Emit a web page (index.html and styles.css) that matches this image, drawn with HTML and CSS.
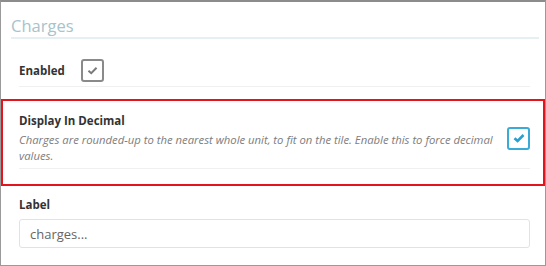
FILE: index.html
```html
<!DOCTYPE html>
<html lang="en">
<head>
  <meta charset="UTF-8">
  <meta name="viewport" content="width=device-width, initial-scale=1.0">
  <title>Charges</title>
  <link rel="stylesheet" href="styles.css">
</head>
<body>
  <div class="panel">
    <h2 class="panel-title">Charges</h2>

    <div class="field field-inline">
      <label class="field-label">Enabled</label>
      <span class="check">
        <svg viewBox="0 0 12 10" width="11" height="9"><path d="M1.5 5.2 L4.6 8 L10.5 2" fill="none" stroke="currentColor" stroke-width="2.2"/></svg>
      </span>
    </div>

    <!-- opcion resaltada -->
    <div class="highlight">
      <div class="field field-split">
        <div class="field-text">
          <label class="field-label">Display In Decimal</label>
          <p class="field-help">Charges are rounded-up to the nearest whole unit, to fit on the tile. Enable this to force decimal values.</p>
        </div>
        <span class="check check-on">
          <svg viewBox="0 0 12 10" width="12" height="10"><path d="M1.5 5.2 L4.6 8 L10.5 2" fill="none" stroke="currentColor" stroke-width="2.6"/></svg>
        </span>
      </div>
    </div>

    <div class="field field-last">
      <label class="field-label">Label</label>
      <input class="text-input" type="text" placeholder="charges...">
    </div>
  </div>
</body>
</html>
```

FILE: styles.css
```css
body {
  margin: 0;
  font-family: "Open Sans", Arial, sans-serif;
  background: white;
}

.panel {
  box-sizing: border-box;
  width: 546px;
  height: 266px;
  border: 1px solid #9a9a9a;
  border-top: 2px solid #8c8c8c;
  overflow: hidden;
}

.panel-title {
  margin: 12px 6px 0 10px;
  padding: 0;
  font-size: 16.5px;
  font-weight: normal;
  line-height: 23px;
  color: #a7c3cb;
  border-bottom: 2px solid #e6eff1;
}

.field {
  margin: 0 15px 0 18px;
}

.field-label {
  display: block;
  font-size: 11.5px;
  font-weight: bold;
  line-height: 17px;
  color: #333;
}

.field-inline {
  display: flex;
  align-items: center;
  gap: 16px;
  margin-top: 20px;
  padding-bottom: 4px;
  border-bottom: 1px solid #f0f0f0;
}

.highlight {
  margin-top: 12px;
  padding: 11px 0 15px;
  border: 2px solid #e3141b;
}

.highlight .field {
  margin: 0 13px 0 16px;
}

.field-split {
  display: flex;
  align-items: center;
  justify-content: space-between;
  padding-bottom: 4px;
  border-bottom: 1px solid #f0f0f0;
}

.field-text {
  flex: 1;
  padding-right: 6px;
}

.field-help {
  margin: 3px 0 0;
  font-size: 11.3px;
  font-style: italic;
  line-height: 16px;
  color: #7d7d7d;
}

.check {
  box-sizing: border-box;
  display: flex;
  align-items: center;
  justify-content: center;
  width: 23px;
  height: 23px;
  border: 2px solid #8a8a8a;
  border-radius: 3px;
  color: #7a7a7a;
}

.check-on {
  border-color: #3aaad6;
  color: #2b9fcf;
}

.field-last {
  margin-top: 10px;
}

.text-input {
  box-sizing: border-box;
  display: block;
  width: 100%;
  height: 29px;
  margin-top: 6px;
  padding: 0 10px;
  font-family: "Open Sans", Arial, sans-serif;
  font-size: 13px;
  border: 1px solid #dfe2e6;
  border-radius: 3px;
}

.text-input::placeholder {
  color: #666;
}
```
